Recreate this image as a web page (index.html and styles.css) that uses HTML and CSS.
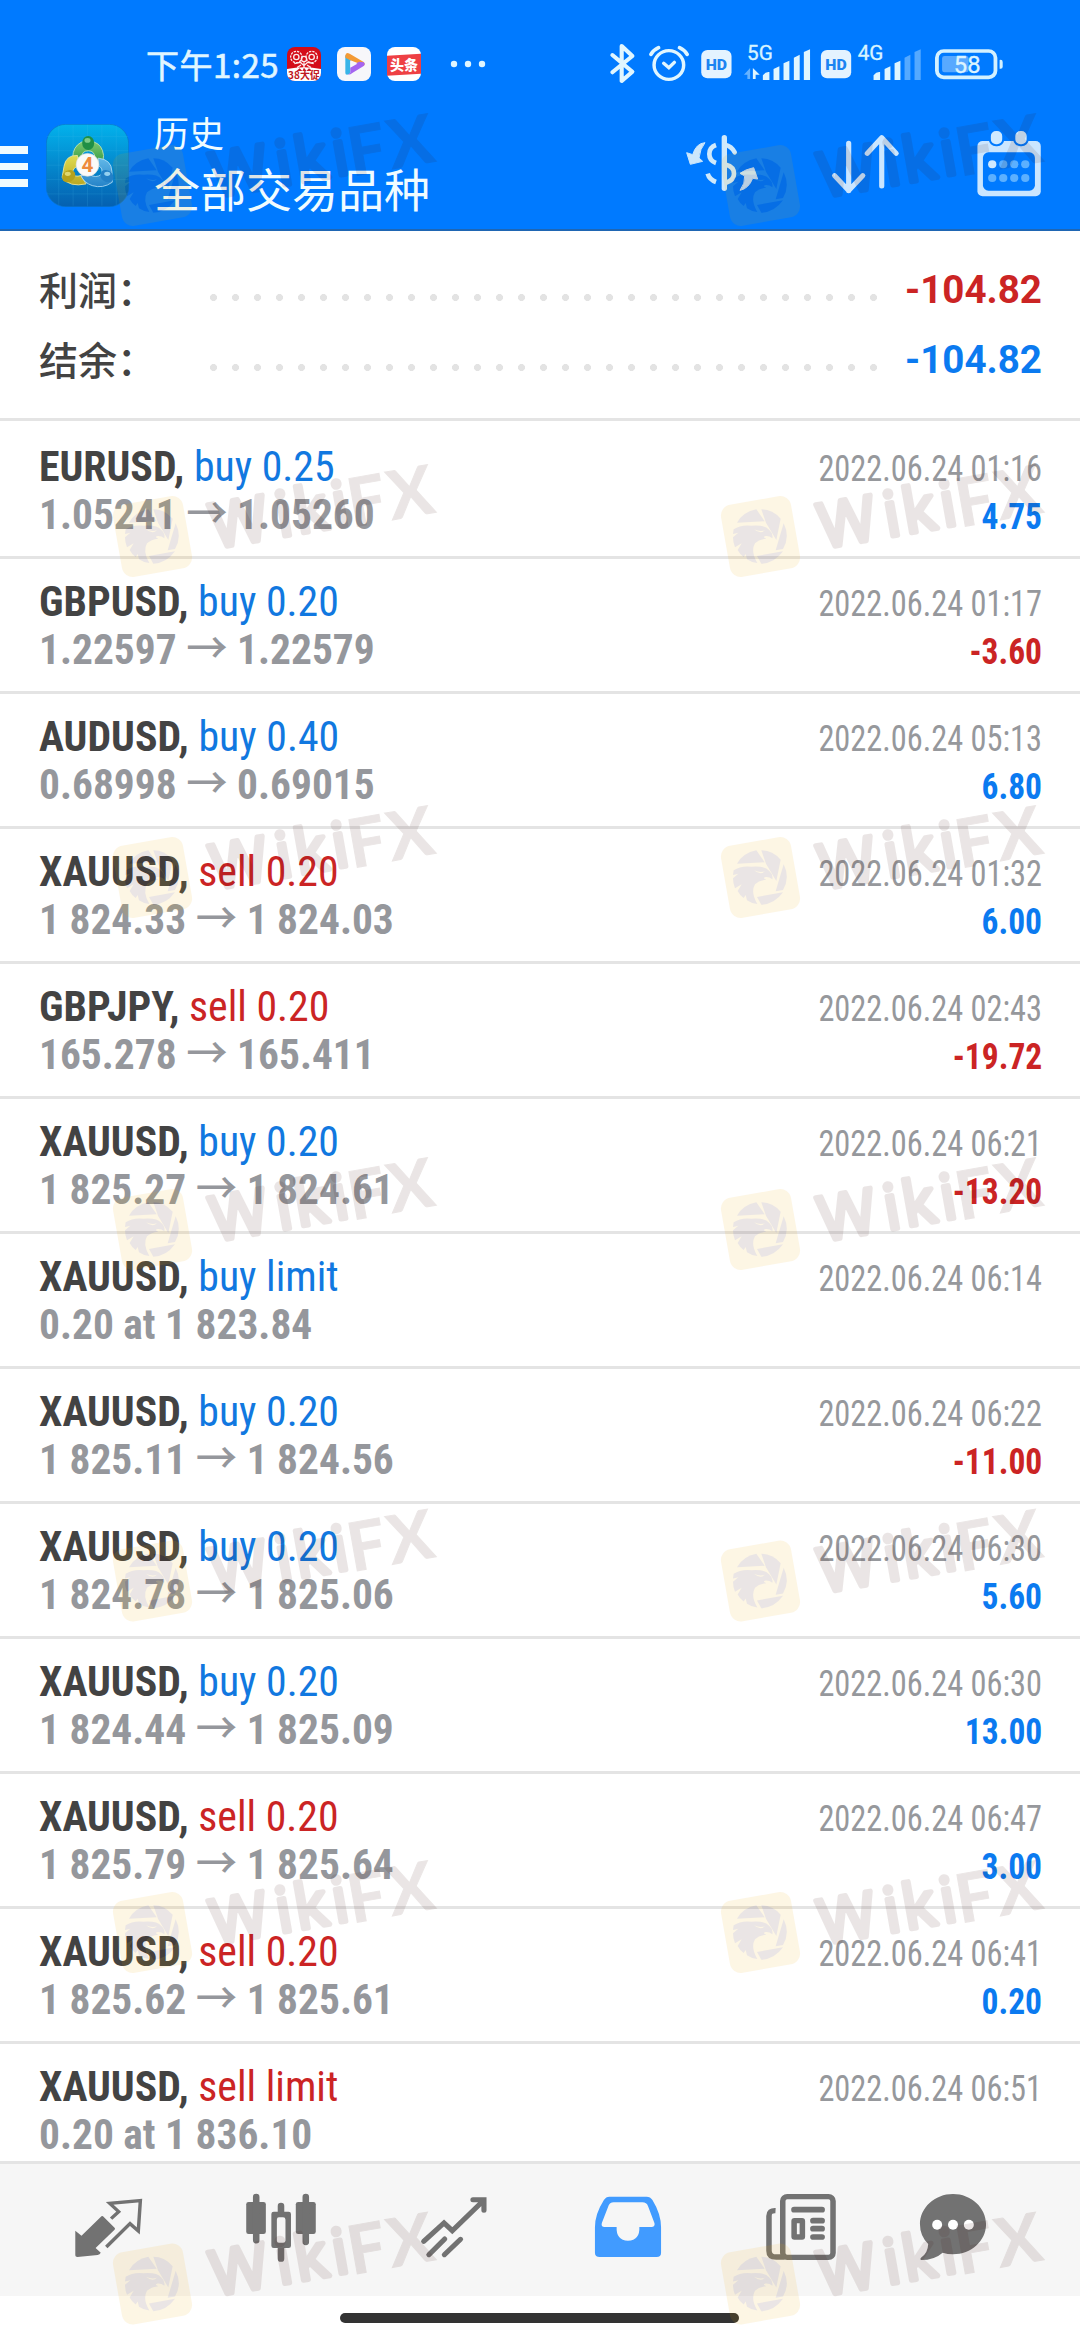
FILE: index.html
```html
<!DOCTYPE html>
<html lang="zh-CN">
<head>
<meta charset="utf-8">
<title>历史</title>
<link rel="stylesheet" href="styles.css">
</head>
<body>
<div class="screen">
  <header class="header">
    <div class="status">
      <span class="clock">下午1:25</span>
      <div class="notifs">
        <svg class="notif" viewBox="0 0 102 102">
          <defs><clipPath id="rnd"><rect width="102" height="102" rx="24"/></clipPath></defs>
          <g clip-path="url(#rnd)">
            <rect width="102" height="102" fill="#d40c18"/>
            <path d="M0 66Q51 56 102 66V102H0Z" fill="#fff"/>
            <g fill="none" stroke="#fbe9e9" stroke-width="4">
              <circle cx="28" cy="30" r="17" stroke-dasharray="7 3"/><circle cx="74" cy="30" r="17" stroke-dasharray="7 3"/>
              <circle cx="28" cy="30" r="8"/><circle cx="74" cy="30" r="8"/><circle cx="51" cy="36" r="8"/>
              <path d="M22 50L40 46L51 56L62 46L80 50M30 62L42 54M72 62L60 54M51 46V70"/>
            </g>
            <path d="M28 72L38 64L46 72L51 62L58 72L66 64L76 72Z" fill="#c8202a"/>
            <text x="51" y="97" class="badge38" text-anchor="middle">38大促</text>
          </g>
        </svg>
        <svg class="notif" viewBox="0 0 102 102">
          <rect width="102" height="102" rx="24" fill="#f7f7fa"/>
          <path d="M25 24V78Q25 86 36 82L40 78V40Z" fill="#38b4e8"/>
          <path d="M25 26Q26 14 38 20L80 45Q86 51 80 57L62 48L40 40L25 32Z" fill="#f39a35"/>
          <path d="M40 78V60L66 44L80 46Q86 51 80 57L46 78Q38 84 34 82Z" fill="#a565f0"/>
          <path d="M40 41L61 50L40 62Z" fill="#f7f7fa"/>
        </svg>
        <svg class="notif" viewBox="0 0 102 102">
          <rect width="102" height="102" rx="24" fill="#fff"/>
          <path d="M0 26L102 20V80L0 86Z" fill="#ee4044"/>
          <text x="51" y="68" class="badge-tt" text-anchor="middle">头条</text>
        </svg>
      </div>
      <svg class="more" viewBox="0 0 36 8"><circle cx="4" cy="4" r="3.2"/><circle cx="18" cy="4" r="3.2"/><circle cx="32" cy="4" r="3.2"/></svg>
      <div class="system">
        <svg width="46" height="44" viewBox="170 126 133.6 132" preserveAspectRatio="none"><path d="M206 165L264 215L233 243V138L264 168L206 217" fill="none" stroke="#e0f6ff" stroke-width="12" stroke-linejoin="round" stroke-linecap="round"/></svg>
        <svg width="48" height="44" viewBox="303.6 126 139.4 132" preserveAspectRatio="none"><g fill="none" stroke="#e0f6ff" stroke-width="10" stroke-linecap="round"><circle cx="370" cy="195" r="43"/><path d="M355 190L370 203L386 187"/><path d="M318 163Q325 150 340 143M423 163Q416 150 401 143" stroke-width="11"/></g></svg>
        <svg width="46" height="44" viewBox="443 126 133.6 132" preserveAspectRatio="none"><rect x="464" y="150" width="88" height="85" rx="18" fill="#e4f3ff"/><text x="508" y="209" class="hd" text-anchor="middle">HD</text></svg>
        <svg width="74" height="44" viewBox="576.6 126 214.9 132" preserveAspectRatio="none"><text x="597" y="180" class="net">5G</text>
          <g fill="#e0f6ff"><path d="M643 240V226Q652 214 662 216V240ZM674 240V207L691 199V240ZM703 240V190L720 182V240ZM733 240V173L750 164V240ZM762 240V156L780 148V240Z"/><path d="M614 204L634 224H622V237H614Z"/></g><path d="M606 204V237H598V224H588Z" fill="#66b2ff"/></svg>
        <svg width="42" height="44" viewBox="795 126 122 132" preserveAspectRatio="none"><rect x="815" y="150" width="88" height="85" rx="18" fill="#e4f3ff"/><text x="859" y="209" class="hd" text-anchor="middle">HD</text></svg>
        <svg width="70" height="44" viewBox="917 126 203.3 132" preserveAspectRatio="none"><text x="922" y="180" class="net">4G</text><path d="M968 240V226Q977 214 987 216V240ZM1000 240V207L1017 199V240ZM1029 240V190L1046 182V240Z" fill="#e0f6ff"/><path d="M1058 240V173L1075 164V240ZM1087 240V156L1105 148V240Z" fill="#55a9ff"/></svg>
        <svg width="80" height="44" viewBox="1120.3 126 232.3 132" preserveAspectRatio="none"><rect x="1152" y="153" width="170" height="79" rx="20" fill="none" stroke="#d4f1ff" stroke-width="11"/><rect x="1167" y="168" width="77" height="49" rx="7" fill="#58a9ff"/><path d="M1334 180Q1343 178 1343 186V200Q1343 208 1334 206Z" fill="#d4f1ff"/><text x="1240" y="218" class="batt" text-anchor="middle">58</text></svg>
      </div>
    </div>
    <div class="appbar">
      <div class="burger"><i></i><i></i><i></i></div>
      <svg class="logo" viewBox="20 18 248 248">
        <defs>
          <linearGradient id="sky" x1="0" y1="0" x2="0" y2="1"><stop offset="0" stop-color="#02b2ec"/><stop offset=".5" stop-color="#0488cd"/><stop offset="1" stop-color="#0560b0"/></linearGradient>
          <linearGradient id="gr" x1="0" y1="0" x2="0" y2="1"><stop offset="0" stop-color="#7cc96e"/><stop offset="1" stop-color="#2c9440"/></linearGradient>
          <linearGradient id="ye" x1="0" y1="0" x2="0" y2="1"><stop offset="0" stop-color="#e0dc50"/><stop offset="1" stop-color="#b9a824"/></linearGradient>
          <linearGradient id="bl" x1="0" y1="0" x2="0" y2="1"><stop offset="0" stop-color="#62b8e8"/><stop offset="1" stop-color="#2583c8"/></linearGradient>
        </defs>
        <rect x="21" y="19" width="246" height="246" rx="58" fill="url(#sky)" stroke="#0b74c8" stroke-width="2"/>
        <path d="M22 98H266M22 141H266M22 184H266M22 227H266M22 55H266M58 22V262M101 22V262M144 20V264M187 22V262M230 22V262" stroke="#4fc0ee" stroke-width="1.5" opacity=".3"/>
        <g stroke-width="2.5">
          <path d="M126 72Q100 86 100 118L126 120Q126 98 146 98Q166 98 166 120L172 142Q192 138 192 112Q188 80 164 72Z" fill="url(#gr)" stroke="#c4e6b4"/>
          <path d="M114 112Q80 110 74 144L68 178Q90 208 140 197L124 172Q106 178 100 166Q98 148 120 142Z" fill="url(#ye)" stroke="#eeeaa0"/>
          <path d="M176 120Q216 124 217 160L218 192Q190 212 158 202Q134 194 124 172L148 168Q170 182 186 168Q192 150 176 142Z" fill="url(#bl)" stroke="#b4def4"/>
        </g>
        <ellipse cx="146" cy="75" rx="18" ry="21" fill="#1f8f45"/><ellipse cx="144" cy="67" rx="9" ry="7" fill="#7ccb8a"/>
        <ellipse cx="88" cy="174" rx="21" ry="17" transform="rotate(-35 88 174)" fill="#b5a11c"/><ellipse cx="85" cy="167" rx="9" ry="6" fill="#e0d870"/>
        <ellipse cx="202" cy="174" rx="21" ry="17" transform="rotate(35 202 174)" fill="#2380c6"/><ellipse cx="203" cy="167" rx="9" ry="6" fill="#94d0f0"/>
        <circle cx="144" cy="140" r="34" fill="#fbfaf8" stroke="#d9dedf" stroke-width="2"/>
        <text x="144" y="162" class="four" text-anchor="middle">4</text>
      </svg>
      <div class="titles"><div class="t1">历史</div><div class="t2">全部交易品种</div></div>
      <div class="actions">
        <svg width="90" height="75" viewBox="0 0 270 225"><g fill="none" stroke="#cfe9fb" stroke-width="14"><path d="M133 23V175" stroke-width="16" stroke-linecap="round"/><path d="M108 45Q88 52 88 72Q88 92 108 99" /><path d="M135 44Q155 48 164 67" stroke-linecap="round"/><path d="M83 131Q88 149 108 156"/><path d="M138 104Q162 110 162 131Q162 150 138 158"/></g><g fill="#cbe6fb" stroke="#cbe6fb" stroke-width="3" stroke-linejoin="round"><path d="M75 38Q48 40 38 74L20 68L31 103L68 94L57 84Q60 56 75 38Z"/><path d="M180 181Q196 160 194 138L180 130Q196 118 221 113L233 147L218 145Q206 176 180 181Z"/></g></svg>
        <svg width="90" height="75" viewBox="804 390 261.4 225" preserveAspectRatio="none"><path d="M896 430V572M855 527L896 572L937 527M992 558V413M950 460L992 413L1034 460" fill="none" stroke="#cbe6ff" stroke-width="15" stroke-linecap="round" stroke-linejoin="round"/></svg>
        <svg width="90" height="75" viewBox="1230 390 261.4 225" preserveAspectRatio="none"><rect x="1269" y="423" width="184" height="166" rx="15" fill="#cbe6ff"/><rect x="1285" y="457" width="151" height="115" rx="16" fill="#007aff"/><g fill="#cfe9ff" stroke="#007aff" stroke-width="6"><rect x="1305" y="390" width="39" height="46" rx="18"/><rect x="1376" y="390" width="39" height="46" rx="18"/></g><g fill="#5cb0ff"><circle cx="1312" cy="493" r="12" fill="#cfe9ff"/><circle cx="1344" cy="493" r="12"/><circle cx="1376" cy="493" r="12"/><circle cx="1408" cy="493" r="12"/><circle cx="1312" cy="534" r="12"/><circle cx="1344" cy="534" r="12"/><circle cx="1376" cy="534" r="12"/><circle cx="1408" cy="534" r="12"/></g></svg>
      </div>
    </div>
  </header>

  <section class="summary">
    <div class="sum"><span class="label">利润：</span><span class="dots"></span><b class="neg">-104.82</b></div>
    <div class="sum"><span class="label">结余：</span><span class="dots"></span><b class="pos">-104.82</b></div>
  </section>

  <main class="list">
    <article class="row"><div class="line"><span class="sym">EURUSD, <span class="buy">buy 0.25</span></span><time>2022.06.24 01:16</time></div><div class="line"><span class="price">1.05241 <span class="arr">→</span> 1.05260</span><b class="val pos">4.75</b></div></article>
    <article class="row"><div class="line"><span class="sym">GBPUSD, <span class="buy">buy 0.20</span></span><time>2022.06.24 01:17</time></div><div class="line"><span class="price">1.22597 <span class="arr">→</span> 1.22579</span><b class="val neg">-3.60</b></div></article>
    <article class="row"><div class="line"><span class="sym">AUDUSD, <span class="buy">buy 0.40</span></span><time>2022.06.24 05:13</time></div><div class="line"><span class="price">0.68998 <span class="arr">→</span> 0.69015</span><b class="val pos">6.80</b></div></article>
    <article class="row"><div class="line"><span class="sym">XAUUSD, <span class="sell">sell 0.20</span></span><time>2022.06.24 01:32</time></div><div class="line"><span class="price">1 824.33 <span class="arr">→</span> 1 824.03</span><b class="val pos">6.00</b></div></article>
    <article class="row"><div class="line"><span class="sym">GBPJPY, <span class="sell">sell 0.20</span></span><time>2022.06.24 02:43</time></div><div class="line"><span class="price">165.278 <span class="arr">→</span> 165.411</span><b class="val neg">-19.72</b></div></article>
    <article class="row"><div class="line"><span class="sym">XAUUSD, <span class="buy">buy 0.20</span></span><time>2022.06.24 06:21</time></div><div class="line"><span class="price">1 825.27 <span class="arr">→</span> 1 824.61</span><b class="val neg">-13.20</b></div></article>
    <article class="row"><div class="line"><span class="sym">XAUUSD, <span class="buy">buy limit</span></span><time>2022.06.24 06:14</time></div><div class="line"><span class="price">0.20 at 1 823.84</span></div></article>
    <article class="row"><div class="line"><span class="sym">XAUUSD, <span class="buy">buy 0.20</span></span><time>2022.06.24 06:22</time></div><div class="line"><span class="price">1 825.11 <span class="arr">→</span> 1 824.56</span><b class="val neg">-11.00</b></div></article>
    <article class="row"><div class="line"><span class="sym">XAUUSD, <span class="buy">buy 0.20</span></span><time>2022.06.24 06:30</time></div><div class="line"><span class="price">1 824.78 <span class="arr">→</span> 1 825.06</span><b class="val pos">5.60</b></div></article>
    <article class="row"><div class="line"><span class="sym">XAUUSD, <span class="buy">buy 0.20</span></span><time>2022.06.24 06:30</time></div><div class="line"><span class="price">1 824.44 <span class="arr">→</span> 1 825.09</span><b class="val pos">13.00</b></div></article>
    <article class="row"><div class="line"><span class="sym">XAUUSD, <span class="sell">sell 0.20</span></span><time>2022.06.24 06:47</time></div><div class="line"><span class="price">1 825.79 <span class="arr">→</span> 1 825.64</span><b class="val pos">3.00</b></div></article>
    <article class="row"><div class="line"><span class="sym">XAUUSD, <span class="sell">sell 0.20</span></span><time>2022.06.24 06:41</time></div><div class="line"><span class="price">1 825.62 <span class="arr">→</span> 1 825.61</span><b class="val pos">0.20</b></div></article>
    <article class="row"><div class="line"><span class="sym">XAUUSD, <span class="sell">sell limit</span></span><time>2022.06.24 06:51</time></div><div class="line"><span class="price">0.20 at 1 836.10</span></div></article>
  </main>

  <nav class="nav">
    <a><svg viewBox="183.3 72 261.4 396" preserveAspectRatio="none"><path d="M219 272L237 287L295 229Q298 227 301 230L333 263Q336 266 333 269L278 324L293 338Q290 344 284 345L225 351Q219 351 219 346Z" fill="#727272"/><path d="M323 236L345 215L319 190L408 182L402 273L378 251L309 321" fill="none" stroke="#727272" stroke-width="10"/></svg></a>
    <a><svg viewBox="685.3 72 261.4 396" preserveAspectRatio="none"><g fill="#727272"><rect x="715" y="186" width="57" height="96" rx="7"/><rect x="859" y="186" width="58" height="96" rx="7"/><path d="M788 222Q788 215 795 215H838Q845 215 845 222V317Q845 324 838 324H795Q788 324 788 317ZM810 232Q804 232 804 239V302Q804 308 810 308H822Q829 308 829 302V239Q829 232 822 232Z" fill-rule="evenodd"/></g><path d="M744 171V301M888 171V306M816 198V216M816 322V356" stroke="#727272" stroke-width="19" stroke-linecap="round"/></svg></a>
    <a><svg viewBox="1187.3 72 261.4 396" preserveAspectRatio="none"><path d="M1230 304L1289 249L1313 272L1403 182M1373 179H1405V211M1245 344L1291 297M1290 344L1337 298" fill="none" stroke="#727272" stroke-width="15" stroke-linecap="round"/></svg></a>
    <a><svg viewBox="123.3 72 261.4 396" preserveAspectRatio="none"><path fill-rule="evenodd" d="M200 170H308Q319 170 325 180Q350 222 350 262V338Q350 351 337 351H172Q158 351 158 338V262Q158 222 184 180Q190 170 200 170ZM212 187Q202 187 198 196L178 249Q175 261 186 261H221Q219 301 254 302Q289 301 287 261H322Q333 261 331 250L312 198Q308 187 296 187Z" fill="#419bff"/></svg></a>
    <a><svg viewBox="627.3 72 261.4 396" preserveAspectRatio="none"><g fill="none" stroke="#727272"><rect x="705" y="170" width="146" height="182" rx="13" stroke-width="16"/><path d="M684 212Q665 211 665 228V332Q665 351 686 351H710" stroke-width="16"/><rect x="738" y="242" width="24" height="49" rx="1" stroke-width="16" stroke-linejoin="round"/><path d="M738 209H819M793 242H819M793 266H819M793 291H819" stroke-width="17" stroke-linecap="round"/></g></svg></a>
    <a class="last"><svg viewBox="1068.3 72 261.4 396" preserveAspectRatio="none"><path d="M1199 162C1252 162 1295 203 1295 253C1295 303 1252 343 1199 343Q1183 343 1169 338Q1145 360 1106 360Q1102 357 1106 353Q1126 340 1127 312Q1103 288 1103 253C1103 203 1146 162 1199 162Z" fill="#727272"/><g fill="#fff"><ellipse cx="1153" cy="254" rx="14.5" ry="15"/><ellipse cx="1199" cy="254" rx="14.5" ry="15"/><ellipse cx="1245" cy="254" rx="14.5" ry="15"/></g></svg></a>
  </nav>
  <div class="gesture"><i></i></div>

  <svg class="marks" viewBox="0 0 1080 2340" aria-hidden="true">
    <defs>
      <g id="mark">
        <g opacity=".1">
          <rect x="-35.5" y="-36.5" width="71" height="73" rx="11" fill="#f0aa00" transform="rotate(-10)"/>
          <g transform="translate(-45.5 -46.5) scale(.33333)" fill="#3c0f0a">
            <path d="M66 98Q84 66 124 58L149 94Z"/>
            <path d="M139 58Q172 58 197 86L184 150L153 98Z"/>
            <path d="M206 100Q226 140 204 177L182 181Z"/>
            <path d="M126 198L204 184Q178 220 139 221Z"/>
            <path d="M56 118Q78 103 110 107Q150 104 163 120Q175 130 172 145Q163 137 152 138Q140 140 154 146Q132 148 120 160Q106 184 127 219Q110 218 96 208L92 192L86 201Q74 192 68 180L80 160L60 172Q54 158 54 142L70 128L54 132Z"/>
            <path d="M117 118Q134 126 150 121Q136 134 117 118Z" fill="#f0aa00"/>
          </g>
          <g transform="rotate(-10)" fill="#3c0f0a" stroke="#3c0f0a">
            <text class="wiki" y="22.5" x="59 125 144 182">Wiki</text>
            <text class="fx" y="25.5" x="198 239">FX</text>
          </g>
        </g>
      </g>
    </defs>
    <use href="#mark" x="152.5" y="185.5"/><use href="#mark" x="760.5" y="185.5"/>
    <use href="#mark" x="152.5" y="536.5"/><use href="#mark" x="760.5" y="536.5"/>
    <use href="#mark" x="152.5" y="877.5"/><use href="#mark" x="760.5" y="877.5"/>
    <use href="#mark" x="152.5" y="1229.5"/><use href="#mark" x="760.5" y="1229.5"/>
    <use href="#mark" x="152.5" y="1581"/><use href="#mark" x="760.5" y="1581"/>
    <use href="#mark" x="152.5" y="1932.5"/><use href="#mark" x="760.5" y="1932.5"/>
    <use href="#mark" x="152.5" y="2284"/><use href="#mark" x="760.5" y="2284"/>
  </svg>
</div>
</body>
</html>
```
FILE: styles.css
```css
* { box-sizing: border-box; }
body { margin: 0; background: #fff; font-family: "Roboto Condensed", Roboto, "Noto Sans CJK SC", sans-serif; }
svg { display: block; flex: none; }
.screen { position: relative; width: 1080px; height: 2340px; overflow: hidden; display: flex; flex-direction: column; background: #fff; }

.header { flex: none; height: 231px; background: #007aff; border-bottom: 2px solid #1f66b3; }
.status { display: flex; align-items: center; height: 107px; padding: 21px 74px 0 146px; }
.clock { font: 400 33px/44px "Noto Sans CJK SC", sans-serif; letter-spacing: .5px; color: #e0f6ff; width: 141px; white-space: nowrap; -webkit-text-stroke: .6px #e0f6ff; }
.notifs { display: flex; gap: 16px; }
.notif { width: 34px; height: 34px; }
.more { width: 36px; height: 8px; margin-left: 29px; fill: #e0f6ff; }
.system { display: flex; margin-left: auto; }
.badge38 { font: 700 30px "Noto Sans CJK SC", sans-serif; fill: #c01822; }
.badge-tt { font: 900 42px "Noto Sans CJK SC", sans-serif; fill: #fff; }
.hd { font: 900 46px Roboto, sans-serif; fill: #1c84f2; }
.net { font: 400 60px Roboto, sans-serif; fill: #d8f4ff; stroke: #d8f4ff; stroke-width: 1px; }
.batt { font: 400 69px Roboto, sans-serif; fill: #dcf4ff; stroke: #dcf4ff; stroke-width: 1px; }
.four { font: 700 62px Roboto, sans-serif; fill: #ee8a3c; }

.appbar { display: flex; height: 122px; }
.burger { width: 46px; padding-top: 39px; display: flex; flex-direction: column; gap: 9px; }
.burger i { width: 28px; height: 7.7px; background: #f0fbff; }
.logo { width: 83px; height: 83px; margin-top: 17px; }
.titles { margin-left: 25px; font-family: "Noto Sans CJK SC", sans-serif; color: #f0fcff; line-height: 50px; }
.t1 { font-size: 35px; }
.t2 { font-size: 46px; margin-top: 5px; }
.actions { display: flex; margin: 23px 26px 0 auto; gap: 57px; }
.actions svg:first-child { margin-right: -10px; }

.summary { flex: none; height: 187px; padding: 24px 38px 0 39px; }
.sum { display: flex; align-items: center; height: 70px; }
.label { font: 500 39px/60px "Noto Sans CJK SC", sans-serif; color: #434343; width: 171px; padding-bottom: 5px; white-space: nowrap; }
.dots { width: 682px; height: 7px; margin-top: 14px; background: radial-gradient(circle at 3.5px 3.5px, #e3e3e3 3.2px, transparent 3.8px) 0 0 / 22px 7px repeat-x; }
.sum b { margin-left: auto; font: 700 38.6px/60px Roboto, sans-serif; }
.pos { color: #0b7af0; }
.neg { color: #cb2424; }

.list { flex: none; height: 1743px; overflow: hidden; }
.row { height: 135px; border-top: 3px solid #e4e4e4; padding: 18.3px 38px 0 39px; }
.row:first-child { height: 138px; padding-top: 21.3px; }
.line { display: flex; justify-content: space-between; align-items: baseline; height: 48px; line-height: 48px; font-size: 43px; white-space: nowrap; }
.sym { font-weight: 700; color: #434343; transform: scaleX(.972); transform-origin: left; }
.sym span { font-weight: 400; }
.sym .buy { color: #1178e0; }
.sym .sell { color: #cb2424; }
.price { font-weight: 700; color: #95979c; transform: scaleX(.963); transform-origin: left; }
.arr { font-family: "Noto Sans CJK SC", sans-serif; font-weight: 500; line-height: 0; }
time { font-size: 36px; line-height: 43px; color: #96989c; transform: scaleX(.898); transform-origin: right; }
.val { font-size: 36px; line-height: 43px; transform: scaleX(.93); transform-origin: right; }

.nav { flex: none; height: 135px; border-top: 3px solid #e4e4e4; background: #f6f6f6; display: flex; padding-left: 21.5px; }
.nav a { width: 173.2px; display: flex; justify-content: center; }
.nav a.last { width: 131px; }
.nav svg { width: 90px; height: 132px; }
.gesture { flex: 1; padding: 17px 0 0 340px; }
.gesture i { display: block; width: 399px; height: 10px; border-radius: 5px; background: #333; }

.marks { position: absolute; left: 0; top: 0; width: 1080px; height: 2340px; pointer-events: none; }
.wiki { font: 400 62px "Open Sans", sans-serif; stroke-width: 5px; stroke-linejoin: round; }
.fx { font: 700 67px Lato, sans-serif; stroke-width: 1px; }
```
